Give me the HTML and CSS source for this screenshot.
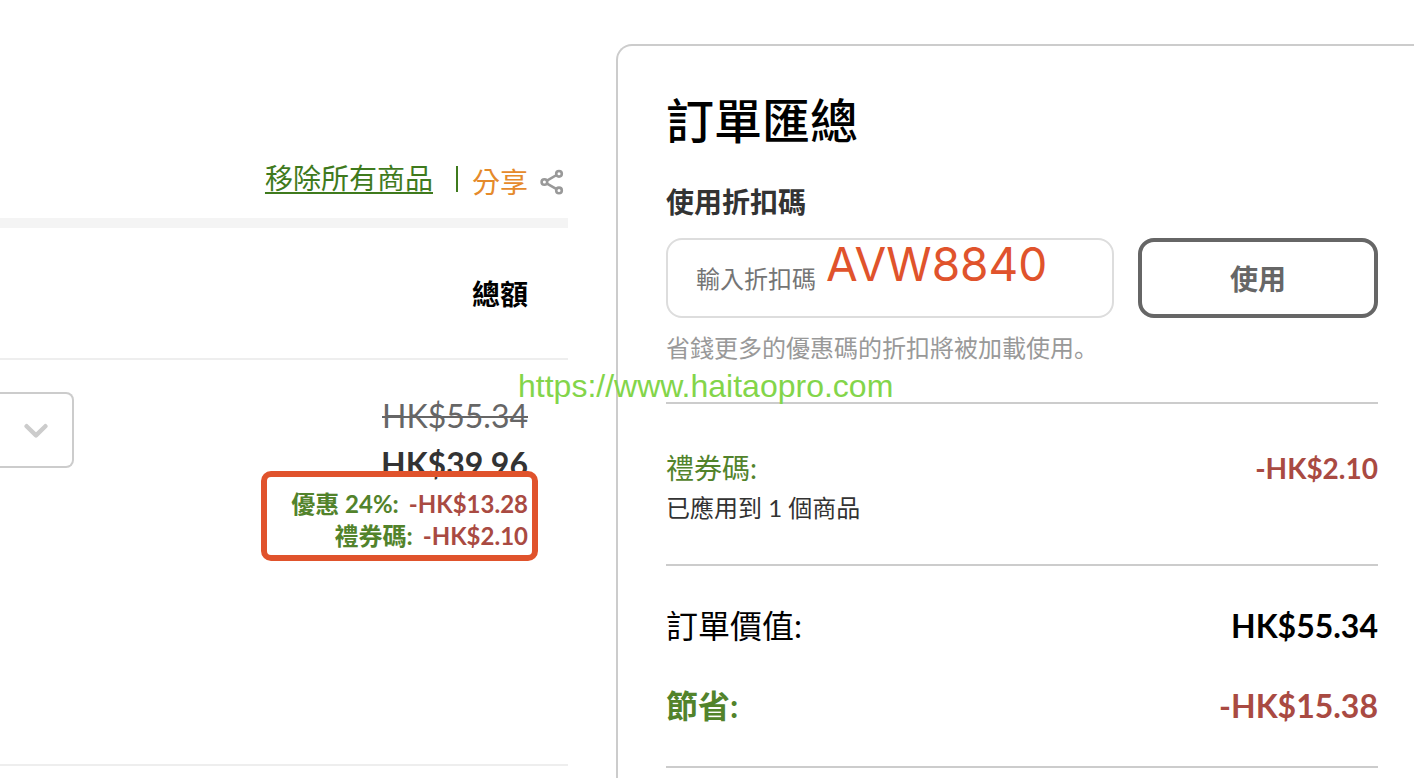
FILE: index.html
```html
<!DOCTYPE html>
<html lang="zh-Hant">
<head>
<meta charset="utf-8">
<meta name="viewport" content="width=device-width, initial-scale=1">
<title>訂單匯總</title>
<link rel="stylesheet" href="styles.css">
</head>
<body>
<main class="page">
  <section class="cart">
    <div class="cart-actions">
      <a class="remove-all" href="#">移除所有商品</a>
      <span class="divider"></span>
      <a class="share" href="#">分享
        <svg class="share-icon" viewBox="0 0 24 26" fill="none" stroke="#999" stroke-width="2.6" aria-hidden="true">
          <path d="M7 11.6 16.6 6M7 14.6l9.6 5.6"/>
          <circle cx="4.4" cy="13" r="2.8"/>
          <circle cx="19" cy="4.8" r="2.8"/>
          <circle cx="19" cy="21.4" r="2.8"/>
        </svg>
      </a>
    </div>
    <div class="cart-head">總額</div>
    <div class="cart-item">
      <div class="quantity">
        <select class="quantity-select" aria-label="數量"><option></option></select>
        <svg class="chevron" viewBox="0 0 24 16" fill="none" stroke="#ccc" stroke-width="4.4" stroke-linecap="round" stroke-linejoin="round" aria-hidden="true"><path d="M2.6 3.2 12 12.4l9.4-9.2"/></svg>
      </div>
      <div class="prices">
        <del class="price price-old">HK$55.34</del>
        <strong class="price price-now">HK$39.96</strong>
        <div class="discounts">
          <div class="discount"><span class="saving">優惠 24%:</span><span class="amount">-HK$13.28</span></div>
          <div class="discount"><span class="saving">禮券碼:</span><span class="amount">-HK$2.10</span></div>
        </div>
      </div>
    </div>
  </section>

  <section class="summary">
    <h1 class="summary-title">訂單匯總</h1>
    <form class="promo">
      <label class="promo-label" for="promo-code">使用折扣碼</label>
      <div class="promo-row">
        <div class="promo-field">
          <input class="promo-input" id="promo-code" type="text" placeholder="輸入折扣碼">
          <span class="code-note">AVW8840</span>
        </div>
        <button class="promo-button" type="button">使用</button>
      </div>
      <p class="promo-help" lang="zh-Hans">省錢更多的優惠碼的折扣將被加載使用。</p>
    </form>
    <div class="voucher">
      <div class="line">
        <span class="voucher-name">禮券碼:</span>
        <strong class="amount">-HK$2.10</strong>
      </div>
      <p class="voucher-note">已應用到 1 個商品</p>
    </div>
    <div class="totals">
      <div class="line"><span>訂單價值:</span><strong>HK$55.34</strong></div>
      <div class="line"><strong class="saving">節省:</strong><strong class="amount">-HK$15.38</strong></div>
    </div>
  </section>
  <div class="watermark">https://www.haitaopro.com</div>
</main>
</body>
</html>
```

FILE: styles.css
```css
* {
  box-sizing: border-box;
}

body {
  margin: 0;
  background: #fff;
  color: #000;
  font-family: Lato, "Noto Sans CJK TC", sans-serif;
  overflow: hidden;
}

h1,
p {
  margin: 0;
}

.page {
  position: relative;
  display: grid;
  grid-template-columns: 568fr 798fr;
  column-gap: 48px;
  min-height: 100vh;
  padding-top: 44px;
}

.cart {
  padding-top: 112px;
}

.cart-actions {
  display: flex;
  align-items: center;
  justify-content: flex-end;
  height: 72px;
  padding: 0 4px 16px 0;
  border-bottom: 10px solid #f4f4f4;
  font-size: 28px;
  line-height: 40px;
}

.remove-all {
  padding-bottom: 2px;
  color: #3f7a1d;
  text-decoration-thickness: 2px;
  text-underline-offset: 3px;
}

.divider {
  width: 2px;
  height: 26px;
  margin: 0 14px 0 23px;
  background: #3f7a1d;
}

.share {
  display: flex;
  align-items: center;
  gap: 12px;
  padding-top: 6px;
  color: #e58a2b;
  text-decoration: none;
}

.share-icon {
  width: 24px;
  height: 26px;
}

.cart-head {
  height: 132px;
  padding-right: 40px;
  border-bottom: 2px solid #eee;
  font-size: 28px;
  font-weight: 700;
  line-height: 132px;
  text-align: right;
}

.cart-item {
  display: flex;
  align-items: flex-start;
  justify-content: space-between;
  min-height: 406px;
  padding: 32px 40px 0 0;
  border-bottom: 2px solid #eee;
}

.quantity {
  position: relative;
}

.quantity-select {
  display: block;
  width: 74px;
  height: 76px;
  border: 2px solid #ccc;
  border-left: 0;
  border-radius: 0 8px 8px 0;
  background: #fff;
  appearance: none;
}

.chevron {
  position: absolute;
  top: 31px;
  left: 24px;
  width: 24px;
  height: 16px;
  pointer-events: none;
}

.prices {
  display: flex;
  flex-direction: column;
  align-items: flex-end;
}

.price {
  font-size: 32px;
  line-height: 48px;
}

.price-old {
  color: #666;
  text-decoration-thickness: 2px;
}

.price-now {
  color: #333;
}

.discounts {
  position: relative;
  font-size: 24px;
  font-weight: 700;
  line-height: 32px;
}

.discounts::after {
  content: "";
  position: absolute;
  inset: -17px -10px -9px -30px;
  border: 6px solid #e0532c;
  border-radius: 10px;
}

.discount {
  display: flex;
  justify-content: flex-end;
  gap: 10px;
}

.saving {
  color: #52832b;
}

.amount {
  color: #a94a42;
}

.summary {
  padding: 45px 36px 0 48px;
  border: 2px solid #ccc;
  border-width: 2px 0 0 2px;
  border-radius: 16px 0 0 0;
}

.summary-title {
  font-size: 48px;
  font-weight: 500;
  line-height: 60px;
}

.promo {
  padding-bottom: 36px;
}

.promo-label {
  display: block;
  padding: 31px 0 16px;
  color: #333;
  font-size: 28px;
  font-weight: 700;
  line-height: 40px;
}

.promo-row {
  display: flex;
  gap: 24px;
}

.promo-field {
  position: relative;
  flex: 1;
}

.promo-input {
  display: block;
  width: 100%;
  height: 80px;
  padding: 0 28px;
  border: 2px solid #ddd;
  border-radius: 16px;
  background: #fff;
  color: #333;
  font-family: inherit;
  font-size: 24px;
}

.promo-input::placeholder {
  color: #757575;
}

.code-note {
  position: absolute;
  top: 0;
  left: 160px;
  color: #e0532c;
  font-family: Inter, sans-serif;
  font-size: 46px;
  line-height: 52px;
}

.promo-button {
  width: 240px;
  height: 80px;
  border: 4px solid #666;
  border-radius: 16px;
  background: #fff;
  color: #666;
  font-family: inherit;
  font-size: 28px;
  font-weight: 700;
}

.promo-help {
  padding-top: 12px;
  color: #999;
  font-family: Lato, "Noto Sans CJK SC", sans-serif;
  font-size: 24px;
  line-height: 36px;
}

.line {
  display: flex;
  justify-content: space-between;
}

.voucher {
  height: 162px;
  padding-top: 44px;
  border-top: 2px solid #ccc;
  font-size: 28px;
  line-height: 40px;
}

.voucher-name {
  color: #52832b;
}

.voucher-note {
  color: #333;
  font-size: 24px;
}

.totals {
  display: grid;
  gap: 40px;
  padding: 40px 0;
  border-top: 2px solid #ccc;
  border-bottom: 2px solid #ccc;
  font-size: 32px;
  line-height: 40px;
}

.watermark {
  position: absolute;
  top: 368px;
  left: 518px;
  color: #83d54a;
  font-family: "Liberation Sans", sans-serif;
  font-size: 32px;
  line-height: 36px;
}
```
